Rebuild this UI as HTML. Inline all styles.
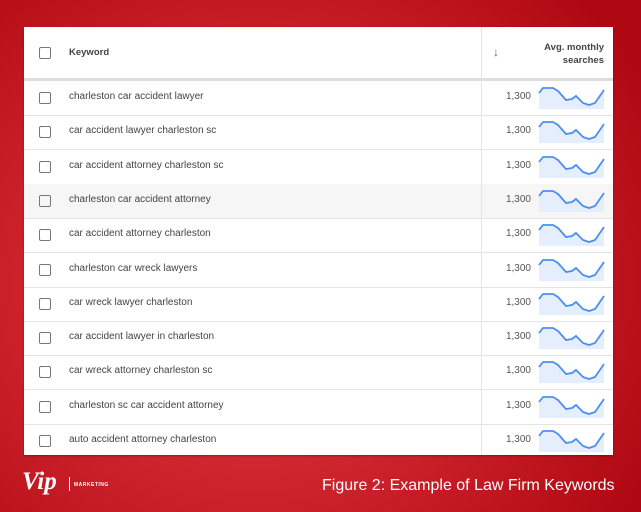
<!DOCTYPE html>
<html><head><style>
body{margin:0;width:641px;height:512px;overflow:hidden;font-family:"Liberation Sans",sans-serif;
background:radial-gradient(ellipse 70% 80% at 40% 55%,#e0424a 0%,#d0262f 45%,#b00812 100%);position:relative}
.t{position:absolute;left:24px;top:27px;width:589px;height:428px;background:#fff;box-shadow:0 1px 2px rgba(0,0,0,.3)}
.h{position:absolute;left:0;top:0;width:589px;height:51px;border-bottom:3px solid #ddd}
.cb{position:absolute;left:15px;width:10px;height:10px;border:1.6px solid #777;border-radius:2px}
.kw{position:absolute;left:45px;font-size:10px;color:#444}
.r{position:absolute;left:0;width:589px;height:34px;border-bottom:1px solid #e4e4e4}
.vd{position:absolute;left:457px;top:0;width:1px;height:428px;background:#e4e4e4;z-index:5}
.n{position:absolute;right:82px;font-size:10px;color:#555}
svg.s{position:absolute;left:514px}
.f{position:absolute;left:322px;top:477px;color:#fff;font-size:16px}
</style></head><body>
<div class="t">
<div class="h"><div class="cb" style="top:20px"></div><div class="kw" style="top:20px;font-weight:bold;font-size:9.5px">Keyword</div>
<div style="position:absolute;left:469px;top:18px;color:#666;font-size:12px">↓</div>
<div style="position:absolute;right:9px;top:14px;text-align:right;font-weight:bold;font-size:9.5px;color:#444;line-height:13px">Avg. monthly<br>searches</div></div>
<div class="vd"></div>
</div>
<script>
var k=["charleston car accident lawyer","car accident lawyer charleston sc","car accident attorney charleston sc","charleston car accident attorney","car accident attorney charleston","charleston car wreck lawyers","car wreck lawyer charleston","car accident lawyer in charleston","car wreck attorney charleston sc","charleston sc car accident attorney","auto accident attorney charleston"];
var t=document.querySelector('.t'),h='';
k.forEach(function(s,i){var y=54+i*34.3;
h+='<div class="r" style="top:'+y+'px;'+(i==3?'background:#f6f6f6;':'')+(i==10?'border:none;':'')+'"><div class="cb" style="top:11px"></div><div class="kw" style="top:10px">'+s+'</div><div class="n" style="top:10px">1,300</div>'+
'<svg class="s" width="70" height="26" style="top:4px"><path d="M1 8 L5 3 L15 3 L20 6 L28 15 L34 14 L38 11 L45 18 L51 20 L57 18 L66 5 L66 24 L1 24Z" fill="#e4eefc"/><path d="M1 8 L5 3 L15 3 L20 6 L28 15 L34 14 L38 11 L45 18 L51 20 L57 18 L66 5" fill="none" stroke="#4d8ef0" stroke-width="1.8"/></svg></div>';});
t.insertAdjacentHTML('beforeend',h);
</script>
<div style="position:absolute;left:22px;top:468px;color:#fff;font:italic bold 25px 'Liberation Serif',serif">Vip</div>
<div style="position:absolute;left:69px;top:477px;width:1px;height:14px;background:#fff"></div>
<div style="position:absolute;left:74px;top:482px;color:#fff;font-size:5px;font-weight:bold;letter-spacing:.5px">MARKETING</div>
<div class="f">Figure 2: Example of Law Firm Keywords</div>
</body></html>
